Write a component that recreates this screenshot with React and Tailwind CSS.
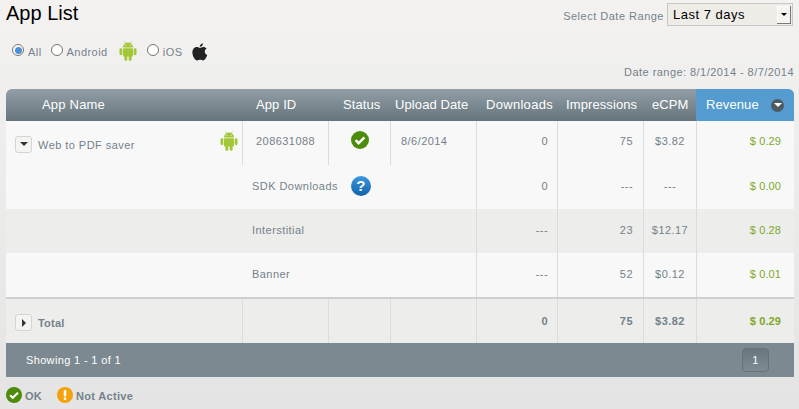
const cols = 'grid grid-cols-[236px_86px_62px_86px_81px_86px_53px_98px]'
const cell = 'border-l border-[#dcdcdc]'

function AndroidIcon({ className }) {
  return (
    <svg className={className} viewBox="0 0 18 20" fill="#a4c639">
      <path d="M4 6.5a5 5 0 0 1 10 0z" />
      <rect x="4" y="7.2" width="10" height="8.3" rx="1" />
      <rect x="0.5" y="7.2" width="2.8" height="7" rx="1.4" />
      <rect x="14.7" y="7.2" width="2.8" height="7" rx="1.4" />
      <rect x="5.4" y="14" width="2.9" height="5.8" rx="1.4" />
      <rect x="9.7" y="14" width="2.9" height="5.8" rx="1.4" />
      <path d="M5.5 0.6l1.4 2.2M12.5 0.6l-1.4 2.2" stroke="#a4c639" strokeWidth="0.7" />
      <circle cx="6.8" cy="4.2" r="0.6" fill="#f3f2f1" />
      <circle cx="11.2" cy="4.2" r="0.6" fill="#f3f2f1" />
    </svg>
  )
}

function AppleIcon() {
  return (
    <svg className="w-[16px] h-[18px]" viewBox="0 0 16 18" fill="#222222">
      <path d="M11 0.3c.1 1.9-1.5 3.6-3.2 3.5C7.6 2 9.300.5 11 .3z" />
      <path d="M8 4.800c.9 0 1.900-.9 3.400-.9 1.200 0 2.400.6 3.200 1.700-2.700 1.600-2.200 5.400.7 6.500-.8 2-2.300 5.300-4.200 5.300-1.100 0-1.500-.7-2.900-.7s-1.900.7-3 .7C3 17.400.4 13.300.4 9.500.4 6.100 2.500 4 4.700 4 6 4 7.100 4.800 8 4.800z" />
    </svg>
  )
}

function CheckBadge({ className }) {
  return (
    <svg className={className} viewBox="0 0 18 18">
      <circle cx="9" cy="9" r="9" fill="#4c8c0a" />
      <path d="M4.600 9.200l3 3 5.800-5.800" fill="none" stroke="#ffffff" strokeWidth="2.400" />
    </svg>
  )
}

function Toggle({ open }) {
  return (
    <span className="w-[17px] h-[17px] rounded-[3px] border border-[#d4d4d0] bg-[#f4f4f2] flex items-center justify-center shrink-0">
      {open ? (
        <span className="border-x-[4px] border-x-transparent border-t-[4px] border-t-[#333333]" />
      ) : (
        <span className="border-y-[4px] border-y-transparent border-l-[4px] border-l-[#333333]" />
      )}
    </span>
  )
}

function Radio({ checked }) {
  return (
    <span className="w-[12px] h-[12px] -mt-[4px] rounded-full border border-[#77736c] bg-white flex items-center justify-center">
      {checked && <span className="w-[7px] h-[7px] rounded-full bg-[#4a90d9]" />}
    </span>
  )
}

function SubRow({ label, help, downloads, impressions, ecpm, revenue, shaded }) {
  return (
    <div className={`${cols} h-[44px] items-stretch ${shaded ? 'bg-[#ededeb]' : 'bg-[#f8f8f8]'}`}>
      <div className="col-span-4 flex items-center pl-[246px] gap-[12px] pb-[2px]">
        <span>{label}</span>
        {help && (
          <span className="w-[20px] h-[20px] ml-[1px] rounded-full bg-gradient-to-b from-[#3b97e0] to-[#0f63a8] text-white font-bold text-[15px] flex items-center justify-center">?</span>
        )}
      </div>
      <div className={`${cell} flex items-center justify-end pr-[9px] pb-[2px]`}>{downloads}</div>
      <div className={`${cell} flex items-center justify-end pr-[10px] pb-[2px]`}>{impressions}</div>
      <div className={`${cell} flex items-center justify-center pb-[2px]`}>{ecpm}</div>
      <div className={`${cell} flex items-center justify-end pr-[13px] pb-[2px] text-[#7da82a] tracking-[0.1px]`}>{revenue}</div>
    </div>
  )
}

export default function App() {
  return (
    <div className="w-[799px] h-[409px] overflow-hidden bg-gradient-to-b from-[#f3f2f1] to-[#e4e4e4] font-['Liberation_Sans',Arial,sans-serif] text-[11px] tracking-[0.45px] text-[#75818a]">
      <div className="flex justify-between h-[38px] pl-[6px] pr-[6px]">
        <h1 className="text-[20px] leading-[26px] text-black tracking-[0px] font-normal">App List</h1>
        <div className="flex items-start gap-[3px] pt-[3px]">
          <span className="mt-[5px] tracking-[0.5px]">Select Date Range</span>
          <div className="w-[126px] h-[23px] bg-[#eeece6] border border-[#c9c7c1] flex items-center justify-between pl-[5px] pr-[1px] text-[13px] text-black tracking-[0.5px]">
            <span>Last 7 days</span>
            <span className="w-[14px] h-[18px] bg-[#f4f3ef] border-r border-b border-[#777777] shadow-[inset_1px_1px_0_#ffffff] flex items-center justify-center">
              <span className="border-x-[3px] border-x-transparent border-t-[3px] border-t-black" />
            </span>
          </div>
        </div>
      </div>

      <div className="flex items-center h-[26px] pl-[12px] pt-[2px]">
        <Radio checked />
        <span className="ml-[4px] mr-[9px]">All</span>
        <Radio />
        <span className="ml-[4px] mr-[10px]">Android</span>
        <AndroidIcon className="w-[18px] h-[20px] ml-[1px] mr-[10px] -mt-[3px]" />
        <Radio />
        <span className="ml-[4px] mr-[9px] tracking-[0.6px]">iOS</span>
        <AppleIcon />
      </div>

      <div className="h-[25px] pr-[5px] pt-[1px] text-right leading-[14px]">Date range: 8/1/2014 - 8/7/2014</div>

      <div className="mx-[6px] w-[788px]">
        <div className={`${cols} h-[32px] rounded-t-[6px] overflow-hidden bg-gradient-to-b from-[#939fa6] to-[#66747c] text-white text-[13px] tracking-[0.1px] items-center`}>
          <div className="pl-[36px] tracking-[0.2px]">App Name</div>
          <div className="pl-[14px]">App ID</div>
          <div className="pl-[15px]">Status</div>
          <div className="pl-[5px]">Upload Date</div>
          <div className="pl-[10px] tracking-[0.3px]">Downloads</div>
          <div className="pl-[9px]">Impressions</div>
          <div className="pl-[9px]">eCPM</div>
          <div className="h-full bg-[#549bd0] flex items-center justify-between pl-[10px] pr-[10px]">
            <span>Revenue</span>
            <span className="w-[13px] h-[13px] rounded-full bg-[#4f5a62] flex items-center justify-center">
              <span className="border-x-[4px] border-x-transparent border-t-[4px] border-t-white" />
            </span>
          </div>
        </div>

        <div className={`${cols} h-[44px] bg-[#f8f8f8] items-stretch`}>
          <div className="flex items-center pl-[9px] pr-[4px]">
            <span className="mt-[2px]"><Toggle open /></span>
            <span className="ml-[6px] flex-1 mt-[4px]">Web to PDF saver</span>
            <AndroidIcon className="w-[18px] h-[20px] -mt-[4px]" />
          </div>
          <div className={`${cell} flex items-center pl-[13px] pb-[4px]`}>208631088</div>
          <div className={`${cell} flex items-center justify-center pb-[6px]`}>
            <CheckBadge className="w-[18px] h-[18px]" />
          </div>
          <div className={`${cell} flex items-center pl-[10px] pb-[4px]`}>8/6/2014</div>
          <div className={`${cell} flex items-center justify-end pr-[9px] pb-[4px]`}>0</div>
          <div className={`${cell} flex items-center justify-end pr-[10px] pb-[4px]`}>75</div>
          <div className={`${cell} flex items-center justify-center pb-[4px]`}>$3.82</div>
          <div className={`${cell} flex items-center justify-end pr-[13px] pb-[4px] text-[#7da82a] tracking-[0.1px]`}>$ 0.29</div>
        </div>

        <SubRow label="SDK Downloads" help downloads="0" impressions="---" ecpm="---" revenue="$ 0.00" />
        <SubRow label="Interstitial" shaded downloads="---" impressions="23" ecpm="$12.17" revenue="$ 0.28" />
        <SubRow label="Banner" downloads="---" impressions="52" ecpm="$0.12" revenue="$ 0.01" />

        <div className={`${cols} h-[46px] bg-[#ededeb] border-t-2 border-[#cfcfcf] font-bold items-stretch`}>
          <div className="flex items-center pl-[9px] pt-[3px]">
            <Toggle />
            <span className="ml-[6px] mt-[2px] tracking-[0.2px]">Total</span>
          </div>
          <div className={cell} />
          <div className={cell} />
          <div className={cell} />
          <div className={`${cell} flex items-center justify-end pr-[9px]`}>0</div>
          <div className={`${cell} flex items-center justify-end pr-[10px]`}>75</div>
          <div className={`${cell} flex items-center justify-center`}>$3.82</div>
          <div className={`${cell} flex items-center justify-end pr-[13px] text-[#7da82a] tracking-[0.1px]`}>$ 0.29</div>
        </div>

        <div className="h-[34px] bg-[#7c8990] flex items-center justify-between pl-[20px] pr-[25px] text-white tracking-[0.35px]">
          <span>Showing 1 - 1 of 1</span>
          <span className="w-[27px] h-[24px] rounded-[4px] border border-[#66727a] bg-gradient-to-b from-[#69767e] to-[#7f8b92] flex items-center justify-center">1</span>
        </div>
      </div>

      <div className="flex items-center h-[32px] pl-[6px] pt-[4px] font-bold tracking-[0.3px]">
        <CheckBadge className="w-[16px] h-[16px]" />
        <span className="ml-[3px] mr-[15px] mt-[2px]">OK</span>
        <svg className="w-[16px] h-[16px]" viewBox="0 0 16 16">
          <circle cx="8" cy="8" r="8" fill="#f5a20a" />
          <rect x="6.700" y="3" width="2.600" height="6.500" rx="1" fill="#ffffff" />
          <circle cx="8" cy="11.800" r="1.400" fill="#ffffff" />
        </svg>
        <span className="ml-[3px] mt-[2px]">Not Active</span>
      </div>
    </div>
  )
}
